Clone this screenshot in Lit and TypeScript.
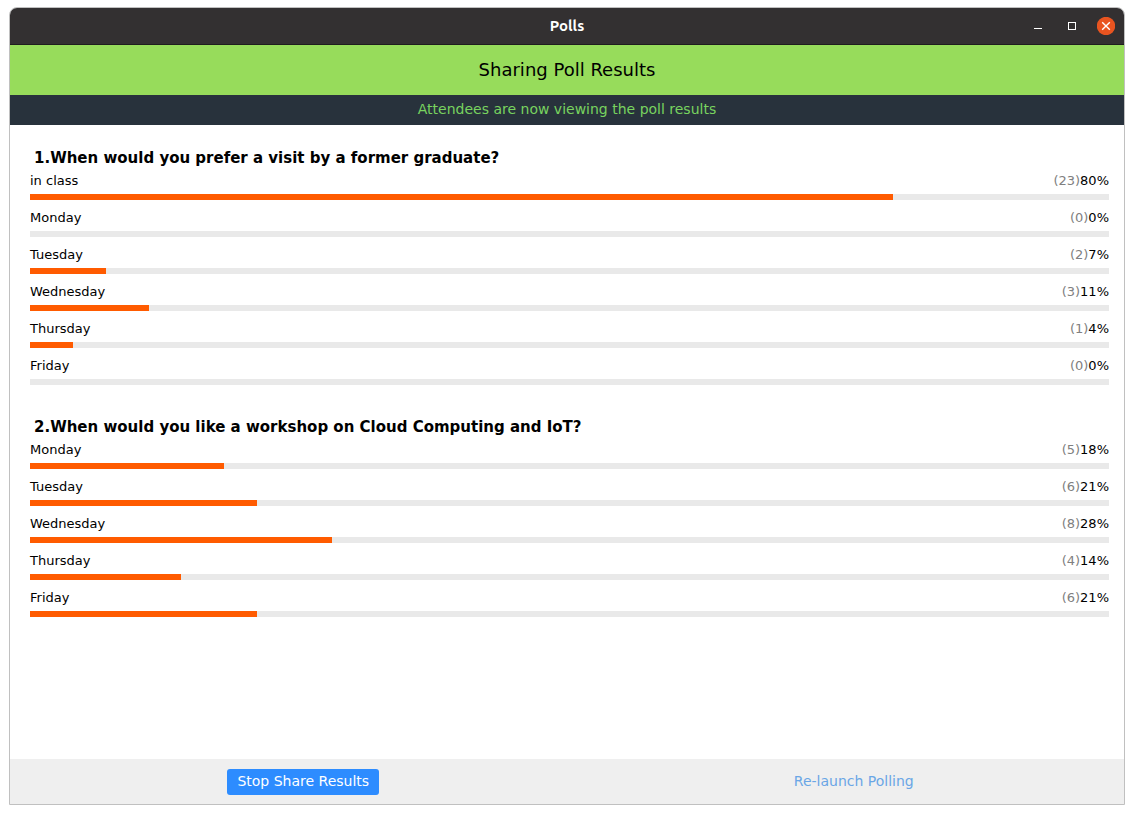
import { LitElement, html, css } from "lit";
import { customElement, property, state } from "lit/decorators.js";

interface PollOption {
  label: string;
  votes: number;
  percent: number;
}

interface PollQuestion {
  text: string;
  options: PollOption[];
}

const option = (label: string, votes: number, percent: number): PollOption => ({
  label,
  votes,
  percent,
});

const QUESTIONS: PollQuestion[] = [
  {
    text: "When would you prefer a visit by a former graduate?",
    options: [
      option("in class", 23, 80),
      option("Monday", 0, 0),
      option("Tuesday", 2, 7),
      option("Wednesday", 3, 11),
      option("Thursday", 1, 4),
      option("Friday", 0, 0),
    ],
  },
  {
    text: "When would you like a workshop on Cloud Computing and IoT?",
    options: [
      option("Monday", 5, 18),
      option("Tuesday", 6, 21),
      option("Wednesday", 8, 28),
      option("Thursday", 4, 14),
      option("Friday", 6, 21),
    ],
  },
];

@customElement("window-bar")
class WindowBar extends LitElement {
  @property() heading = "";

  static styles = css`
    :host {
      display: block;
    }
    .bar {
      display: grid;
      grid-template-columns: 1fr auto 1fr;
      align-items: center;
      height: 36px;
      background: #333031;
      border-bottom: 1px solid #1f1d1e;
    }
    .title {
      grid-column: 2;
      margin: 0;
      font: 700 15px/20px Ubuntu, "Noto Sans", sans-serif;
      color: #fff;
    }
    .controls {
      display: flex;
      justify-content: flex-end;
      gap: 16px;
      padding-right: 9px;
    }
    .control {
      display: block;
      width: 18px;
      height: 18px;
      padding: 0;
      border: 0;
      background: none;
    }
    .icon {
      display: block;
      width: 18px;
      height: 18px;
    }
  `;

  render() {
    return html`
      <header class="bar">
        <h1 class="title">${this.heading}</h1>
        <div class="controls">
          <button class="control" type="button" aria-label="Minimize">
            <svg class="icon" viewBox="0 0 18 18">
              <rect x="5" y="11" width="8" height="1" fill="#fff" />
            </svg>
          </button>
          <button class="control" type="button" aria-label="Maximize">
            <svg class="icon" viewBox="0 0 18 18">
              <rect x="5.5" y="5.5" width="7" height="7" fill="none" stroke="#fff" />
            </svg>
          </button>
          <button class="control" type="button" aria-label="Close">
            <svg class="icon" viewBox="0 0 18 18">
              <circle cx="9" cy="9" r="9.2" fill="#e95420" />
              <path d="M5.2 5.2l7.6 7.6M12.8 5.2l-7.6 7.6" stroke="#fff" stroke-width="1.4" />
            </svg>
          </button>
        </div>
      </header>
    `;
  }
}

@customElement("poll-question")
class PollQuestionView extends LitElement {
  @property({ type: Number }) number = 1;
  @property({ attribute: false }) question!: PollQuestion;

  static styles = css`
    :host {
      display: block;
    }
    .question {
      margin: 0;
      padding-left: 4px;
      font-size: 15px;
      font-weight: 700;
      line-height: 25px;
    }
    .options {
      display: grid;
      gap: 8px;
      margin: 0;
      padding: 0;
      list-style: none;
    }
    .row {
      display: flex;
      justify-content: space-between;
      font-size: 13px;
      line-height: 20px;
    }
    .votes {
      color: #808080;
    }
    .track {
      height: 6px;
      margin-top: 3px;
      background: #e9e9e9;
    }
    .fill {
      height: 100%;
      background: #ff5b00;
    }
  `;

  render() {
    return html`
      <h3 class="question">${this.number}.${this.question.text}</h3>
      <ul class="options">
        ${this.question.options.map(
          (o) => html`
            <li>
              <div class="row">
                <span>${o.label}</span>
                <span><span class="votes">(${o.votes})</span>${o.percent}%</span>
              </div>
              <div
                class="track"
                role="progressbar"
                aria-label=${o.label}
                aria-valuemin="0"
                aria-valuemax="100"
                aria-valuenow=${o.percent}
              >
                <div class="fill" style="width:${o.percent}%"></div>
              </div>
            </li>
          `
        )}
      </ul>
    `;
  }
}

@customElement("app-root")
class AppRoot extends LitElement {
  @state() private questions = QUESTIONS;

  static styles = css`
    :host {
      display: block;
      box-sizing: border-box;
      min-height: 100vh;
      padding: 7px 9px 9px;
      background: #fff;
      color: #000;
      font-family: "DejaVu Sans", Verdana, sans-serif;
    }
    .window {
      display: flex;
      flex-direction: column;
      box-sizing: border-box;
      min-height: calc(100vh - 16px);
      overflow: hidden;
      border: 1px solid #c0c0c0;
      border-radius: 8px 8px 0 0;
      background: #fff;
    }
    .status {
      margin: 0;
      background: #97dc5b;
      font-size: 18px;
      font-weight: 400;
      line-height: 50px;
      text-align: center;
    }
    .notice {
      margin: 0;
      padding-bottom: 2px;
      background: #28323c;
      color: #78d35f;
      font-size: 14px;
      line-height: 28px;
      text-align: center;
    }
    .results {
      flex: 1;
      display: flex;
      flex-direction: column;
      gap: 30px;
      padding: 21px 15px 21px 20px;
    }
    .actions {
      display: grid;
      grid-template-columns: 1fr 1fr;
      gap: 20px;
      justify-items: center;
      padding: 10px 5px 9px 28px;
      background: #efefef;
    }
    .button {
      height: 26px;
      padding: 0 10px 2px;
      border: 0;
      border-radius: 3px;
      background: none;
      color: #6aa6e6;
      font-family: inherit;
      font-size: 14px;
      line-height: 24px;
    }
    .primary {
      background: #2d8cff;
      color: #fff;
    }
  `;

  render() {
    return html`
      <main class="window">
        <window-bar heading="Polls"></window-bar>
        <h2 class="status">Sharing Poll Results</h2>
        <p class="notice">Attendees are now viewing the poll results</p>
        <section class="results">
          ${this.questions.map(
            (q, i) => html`<poll-question .number=${i + 1} .question=${q}></poll-question>`
          )}
        </section>
        <footer class="actions">
          <button class="button primary" type="button">Stop Share Results</button>
          <button class="button" type="button">Re-launch Polling</button>
        </footer>
      </main>
    `;
  }
}
